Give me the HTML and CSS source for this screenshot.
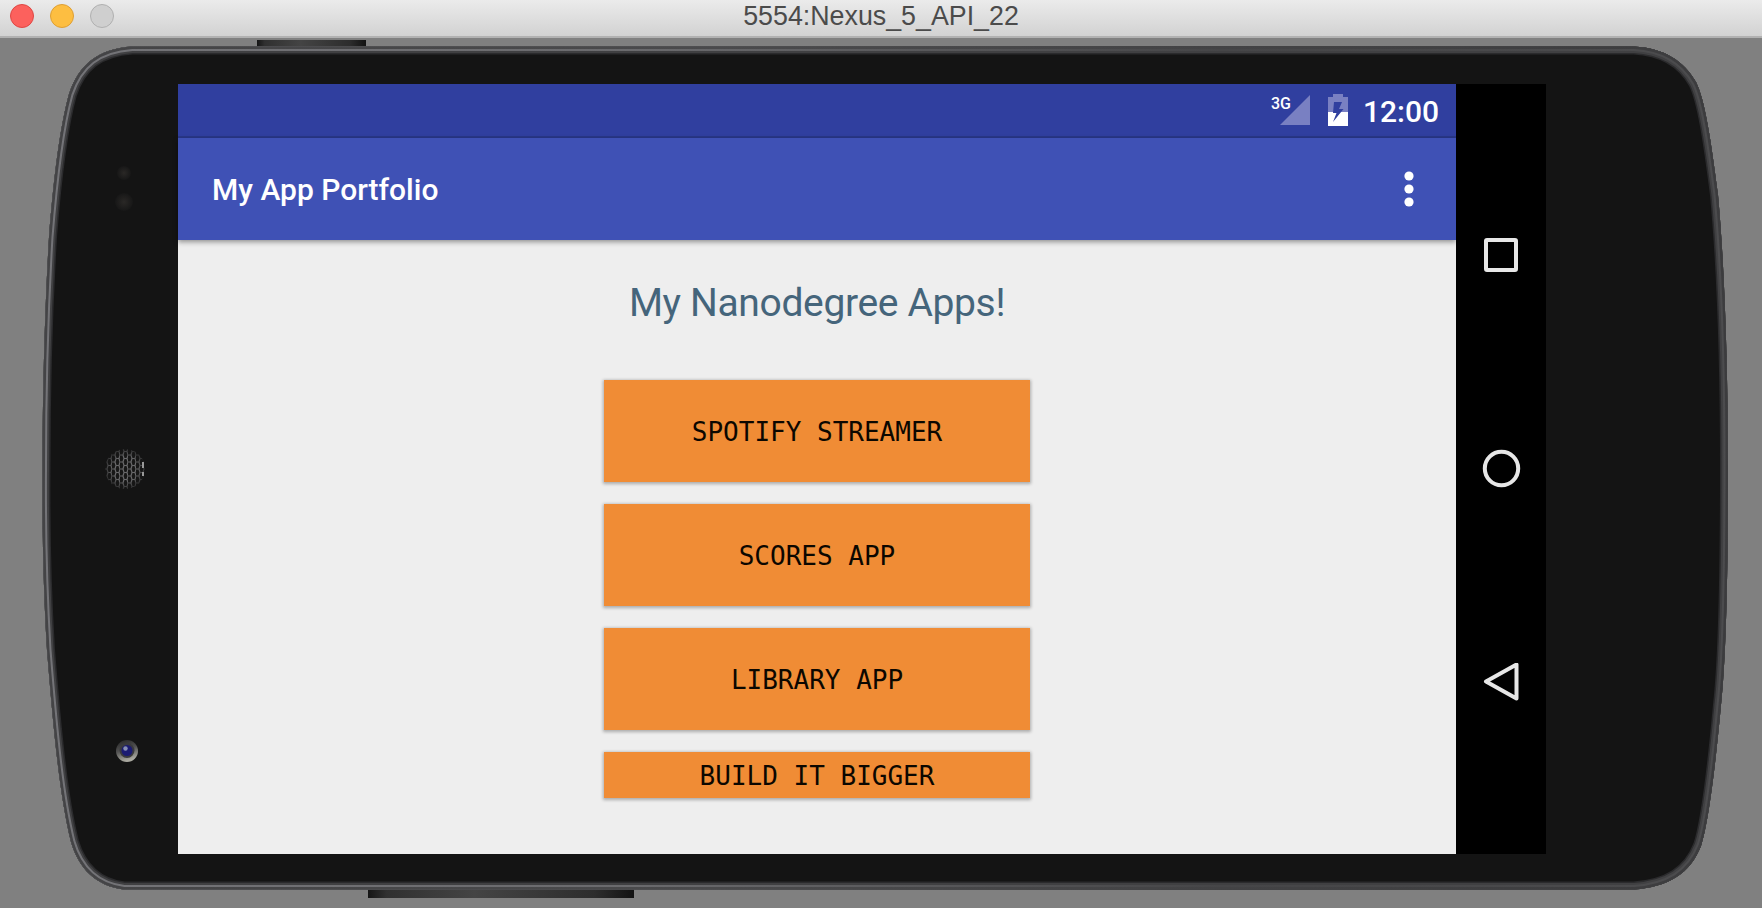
FILE: index.html
```html
<!DOCTYPE html>
<html lang="en">
<head>
<meta charset="utf-8">
<title>5554:Nexus_5_API_22</title>
<link rel="stylesheet" href="styles.css">
</head>
<body>
<div class="window">
  <header class="titlebar">
    <div class="lights"><span class="light red"></span><span class="light yellow"></span><span class="light off"></span></div>
    <div class="window-title">5554:Nexus_5_API_22</div>
  </header>
  <main class="stage">
    <svg class="body" viewBox="0 38 1762 870" width="1762" height="870" aria-hidden="true">
      <defs>
        <linearGradient id="edge" x1="0" x2="1" y1="0" y2="0"><stop offset="0" stop-color="#444446"/><stop offset=".4" stop-color="#4a4a4c"/><stop offset="1" stop-color="#3c3c3e"/></linearGradient>
        <linearGradient id="shine" x1="0" x2="1" y1="0" y2="0"><stop offset="0" stop-color="#747478"/><stop offset=".35" stop-color="#6a6a6d"/><stop offset=".7" stop-color="#464648"/><stop offset="1" stop-color="#4c4c4e"/></linearGradient>
        <linearGradient id="key" x1="0" x2="1" y1="0" y2="0"><stop offset="0" stop-color="#151515"/><stop offset=".07" stop-color="#303030"/><stop offset=".4" stop-color="#444"/><stop offset=".85" stop-color="#2d2d2d"/><stop offset="1" stop-color="#121212"/></linearGradient>
        <pattern id="mesh" width="8" height="7" patternUnits="userSpaceOnUse"><path d="M0 0H3L4 3.500H7L8 7M4 3.500L3 7H0M7 3.500L8 0" fill="none" stroke="#68686a" stroke-width="1.200"/></pattern>
        <radialGradient id="fade"><stop offset=".6" stop-color="#141414" stop-opacity="0"/><stop offset="1" stop-color="#141414" stop-opacity=".7"/></radialGradient>
        <linearGradient id="ring" x1="0" x2=".3" y1="0" y2="1"><stop offset="0" stop-color="#222"/><stop offset=".5" stop-color="#505050"/><stop offset="1" stop-color="#aaa9a0"/></linearGradient>
        <radialGradient id="sensor"><stop offset="0" stop-color="#2a2826"/><stop offset="1" stop-color="#171717"/></radialGradient>
        <path id="shell" d="M132 46.500H1634C1664 48 1684 61 1696 82C1705 100 1711 140 1718 195C1724 260 1728 360 1728 468C1728 575 1726 660 1721 705C1715 770 1708 825 1701 846C1690 874 1668 887 1634 889.500H124C96 886 79 869 71 842C60 797 54 737 47 650C44 600 42 540 42.500 468C42.500 390 45 305 49 237C54 174 60 127 69 94C79 64 98 49 132 46.500Z"/>
        <clipPath id="shell-clip"><use href="#shell"/></clipPath>
      </defs>
      <rect x="257" y="40" width="109" height="8" fill="url(#key)"/>
      <rect x="368" y="888" width="266" height="10" fill="url(#key)"/>
      <use href="#shell" fill="#141414"/>
      <g clip-path="url(#shell-clip)" fill="none">
        <use href="#shell" stroke="#2b2b2d" stroke-width="16"/>
        <use href="#shell" stroke="#404042" stroke-width="13"/>
        <use href="#shell" stroke="url(#shine)" stroke-width="9"/>
        <use href="#shell" stroke="url(#edge)" stroke-width="5"/>
      </g>
      <circle cx="124" cy="173" r="7" fill="url(#sensor)"/>
      <circle cx="124" cy="202" r="9" fill="url(#sensor)"/>
      <circle cx="125" cy="469" r="20" fill="#171717"/>
      <circle cx="125" cy="469" r="20" fill="url(#mesh)"/>
      <circle cx="125" cy="469" r="20.500" fill="url(#fade)"/>
      <path d="M143 462V468M143 472V476" fill="none" stroke="#999" stroke-width="2"/>
      <circle cx="127" cy="751" r="11" fill="url(#ring)"/>
      <circle cx="127" cy="750.500" r="7.500" fill="#3a3a3e"/>
      <circle cx="127" cy="750.500" r="5.500" fill="#1b1b72"/>
      <circle cx="125.500" cy="748.500" r="2.200" fill="#8890b4"/>
    </svg>
    <div class="device">
      <div class="screen">
        <div class="status">
          <svg class="signal" viewBox="0 0 40 32" width="40" height="32"><path d="M39 1V31H9Z" fill="#7980c2"/><text x="0" y="15" textLength="20" lengthAdjust="spacingAndGlyphs" class="net">3G</text></svg>
          <svg class="battery" viewBox="0 0 20 32" width="20" height="32"><path d="M5 0H15V3H20V18H0V3H5Z" fill="#7980c2"/><path d="M0 18H20V32H0Z" fill="#fff"/><path d="M6 8H14L11 15H15.500L5 28L8.500 19H5Z" fill="#303f9f"/></svg>
          <span class="clock">12:00</span>
        </div>
        <div class="appbar">
          <h1 class="app-title">My App Portfolio</h1>
          <svg class="more" viewBox="0 0 10 36" width="10" height="36" fill="#fff"><circle cx="5" cy="5" r="4.600"/><circle cx="5" cy="18" r="4.600"/><circle cx="5" cy="31" r="4.600"/></svg>
        </div>
        <div class="content">
          <h2 class="heading">My Nanodegree Apps!</h2>
          <div class="apps">
            <button class="app">SPOTIFY STREAMER</button>
            <button class="app">SCORES APP</button>
            <button class="app">LIBRARY APP</button>
            <button class="app short">BUILD IT BIGGER</button>
          </div>
        </div>
      </div>
      <nav class="navbar">
        <svg viewBox="0 0 40 40" width="40" height="40"><rect x="5" y="5" width="30" height="30" rx="1"/></svg>
        <svg viewBox="0 0 40 40" width="40" height="40"><circle cx="20.500" cy="19.500" r="16.700"/></svg>
        <svg viewBox="0 0 40 40" width="40" height="40"><path d="M5 18.500L35.500 1.500V35.500Z"/></svg>
      </nav>
    </div>
  </main>
</div>
</body>
</html>
```
FILE: styles.css
```css
* { box-sizing: border-box; }
body { margin: 0; background: #808080; font-family: Roboto, sans-serif; overflow: hidden; }
.window { width: 1762px; height: 908px; display: flex; flex-direction: column; }
.titlebar { position: relative; height: 38px; flex: none; display: flex; justify-content: center; background: linear-gradient(#ebebeb, #d2d2d2); border-bottom: 2px solid #b1b1b1; }
.lights { position: absolute; left: 10px; top: 4px; display: flex; gap: 16px; }
.light { width: 24px; height: 24px; border-radius: 50%; border: 1px solid; }
.red { background: #fc615d; border-color: #df4744; }
.yellow { background: #fdbe41; border-color: #de9f34; }
.off { background: #cfcfcf; border-color: #b0b0b0; }
.window-title { font: 26.8px/33px "Liberation Sans", Arial, sans-serif; color: #4b4b4b; white-space: nowrap; }
.stage { position: relative; height: 870px; padding: 46px 216px 54px 178px; }
.body { position: absolute; left: 0; top: 0; }
.device { position: relative; display: flex; height: 770px; }
.screen { width: 1278px; display: flex; flex-direction: column; background: #eee; }
.status { height: 54px; background: #303f9f; border-bottom: 2px solid #293789; display: flex; align-items: center; justify-content: flex-end; padding-right: 17px; color: #fff; }
.signal { margin-right: 17px; }
.net { font: 500 17px Roboto, sans-serif; fill: #fff; }
.battery { margin-right: 15px; }
.clock { font-size: 30px; line-height: 36px; font-weight: 500; padding-top: 4px; }
.appbar { position: relative; height: 102px; background: #3f51b5; display: flex; align-items: center; justify-content: space-between; padding: 0 42px 0 34px; box-shadow: 0 2px 5px rgba(0,0,0,.4); }
.app-title { margin: 0; padding-top: 1px; color: #fff; font-size: 30px; font-weight: 500; }
.content { display: flex; flex-direction: column; align-items: center; padding-top: 39px; }
.heading { margin: 0; height: 48px; color: #45657b; font-size: 39px; line-height: 48px; font-weight: 400; letter-spacing: -.35px; white-space: nowrap; }
.apps { width: 426px; display: flex; flex-direction: column; gap: 22px; margin-top: 53px; }
.app { height: 102px; padding: 2px 0 0; border: 0; background: #f08c35; color: #0c0700; font: 26px/30px "DejaVu Sans Mono", monospace; box-shadow: 0 1px 3px 1px rgba(0,0,0,.28); }
.short { height: 46px; }
.navbar { width: 90px; background: #000; display: flex; flex-direction: column; align-items: center; justify-content: space-between; padding: 151px 0; }
.navbar svg { fill: none; stroke: #e7e7e7; stroke-width: 4; stroke-linejoin: round; }
```
